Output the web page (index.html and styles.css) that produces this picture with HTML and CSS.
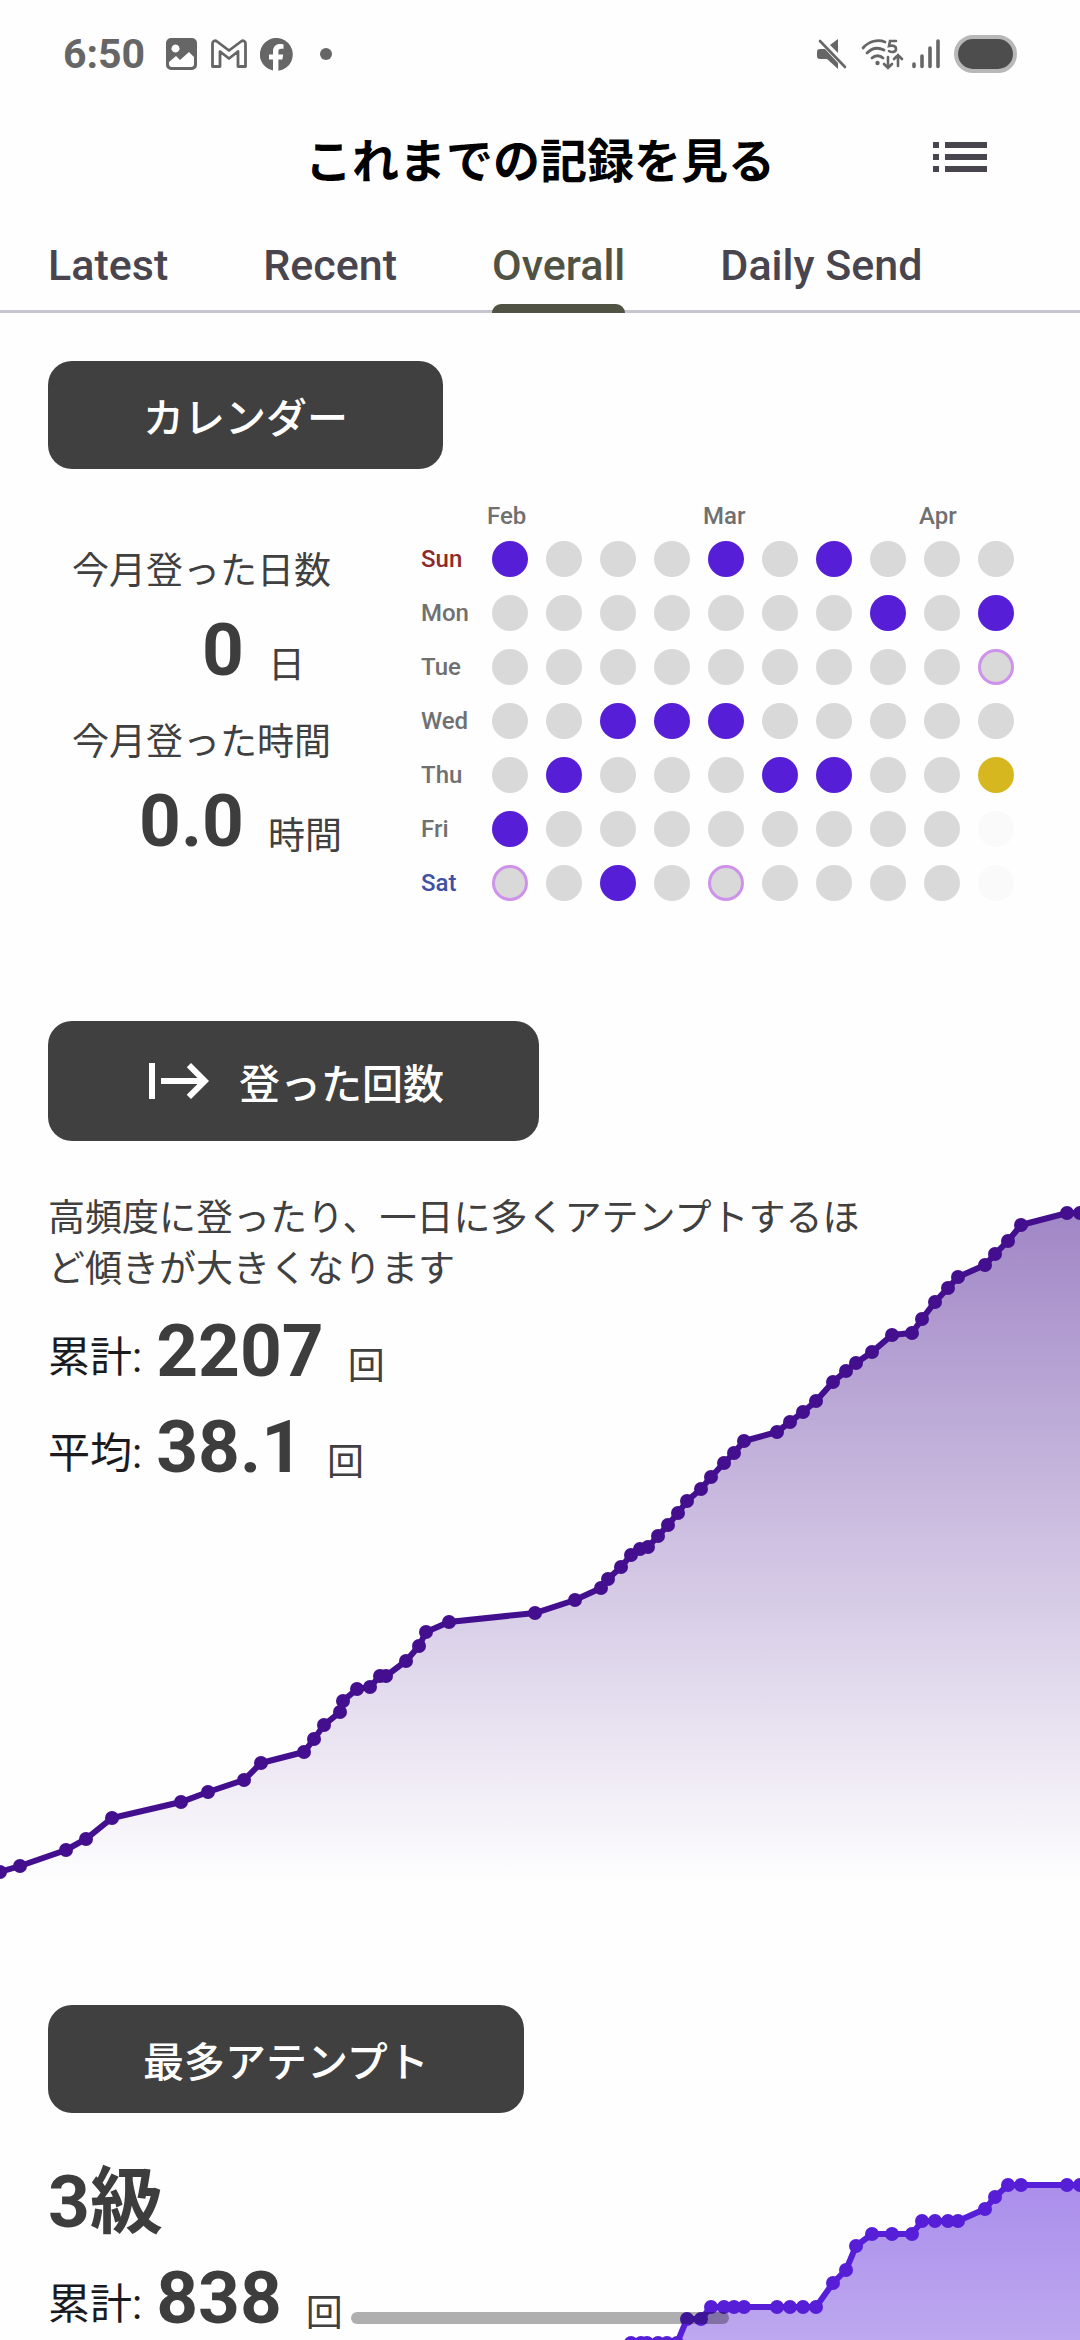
FILE: index.html
```html
<!DOCTYPE html>
<html lang="ja">
<head>
<meta charset="utf-8">
<meta name="viewport" content="width=device-width, initial-scale=1">
<title>これまでの記録を見る</title>
<link rel="stylesheet" href="styles.css">
</head>
<body>
<div class="statusbar">
  <div class="status-left">
    <span class="clock">6:50</span>
    <svg class="s-image" width="32" height="32" viewBox="0 0 32 32"><path fill="#666" fill-rule="evenodd" d="M5 0h21a5 5 0 0 1 5 5v22a5 5 0 0 1-5 5H5a5 5 0 0 1-5-5V5a5 5 0 0 1 5-5zM9.500 6.500a4 4 0 1 0 .01 0zM3 24v2a3 3 0 0 0 3 3h19a3 3 0 0 0 3-3v-7l-5-5-9 8-4-4z"/></svg>
    <svg class="s-mail" width="36" height="30" viewBox="0 0 36 30"><path fill="none" stroke="#666" stroke-width="2.800" stroke-linejoin="round" d="M1.500 27.500V4.500C1.500 2 4 1 6 2.500L18 11.500 30 2.500C32 1 34.500 2 34.500 4.500V27.500H27V12.500L18 19.500 9 12.500V27.500z"/></svg>
    <svg width="33" height="33" viewBox="0 0 33 33"><path fill="#666" d="M13 32.600V21.500H9v-5h4V13.500C13 8.500 16 6 20 6c2 0 3.500.3 3.500.3v4.400h-2.200c-2.200 0-2.900 1.300-2.900 2.700v3.100h4.800l-.8 5h-4V32.800A16.500 16.500 0 1 0 13 32.600z"/></svg>
    <span class="dot-more"></span>
  </div>
  <div class="status-right">
    <svg class="s-mute" width="30" height="32" viewBox="0 0 30 32"><path fill="#666" d="M0 14a3 3 0 0 1 3-3h5l13 14v6L10 21H3a3 3 0 0 1-3-3zM13 7l8-6v14z"/><path stroke="#666" stroke-width="2.600" stroke-linecap="round" d="M3 3l25 26"/></svg>
    <svg class="s-wifi" width="43" height="32" viewBox="0 0 43 32"><g fill="none" stroke="#666" stroke-width="2.800" stroke-linecap="round"><path d="M2 10C8 3 17 1 24 4M6 15c5-5 11-6 17-3M11 20c3-3 8-3 11 0"/><path stroke-width="2.600" d="M35 3h-6l-1 5c4-1 7 0 7 3s-4 4-7 2M27 19v11M23 26l4 4 4-4M37 28V17M33 21l4-4 4 4"/></g><circle cx="16.500" cy="25" r="2.200" fill="#666"/></svg>
    <svg class="s-signal" width="28" height="30" viewBox="0 0 28 30"><path stroke="#666" stroke-width="3.600" stroke-linecap="round" d="M2 25v2.500M10 17v10.500M18 9v18.500M26 2v25.500"/></svg>
    <span class="battery"></span>
  </div>
</div>

<header class="appbar">
  <h1 class="title">これまでの記録を見る</h1>
  <button class="menu" type="button" aria-label="リスト"><svg width="72" height="72" viewBox="0 0 24 24"><path fill="currentColor" d="M3 13h2v-2H3v2zm0 4h2v-2H3v2zm0-8h2V7H3v2zm4 4h14v-2H7v2zm0 4h14v-2H7v2zM7 7v2h14V7H7z"/></svg></button>
</header>

<nav class="tabs">
  <a class="tab" href="#latest">Latest</a>
  <a class="tab" href="#recent">Recent</a>
  <a class="tab active" href="#overall" aria-current="page">Overall</a>
  <a class="tab" href="#daily">Daily Send</a>
</nav>

<main class="content">
  <section class="calendar-section">
    <button class="chip" type="button"><span class="chip-text">カレンダー</span></button>
    <div class="calendar-row">
      <div class="month-stats">
        <p class="stat-label">今月登った日数</p>
        <p class="month-value"><strong class="num">0</strong><span class="unit">日</span></p>
        <p class="stat-label">今月登った時間</p>
        <p class="month-value"><strong class="num">0.0</strong><span class="unit">時間</span></p>
      </div>
      <table class="calendar">
        <thead>
          <tr><td></td><th colspan="4" scope="colgroup">Feb</th><th colspan="4" scope="colgroup">Mar</th><th colspan="2" scope="colgroup">Apr</th></tr>
        </thead>
        <tbody>
          <tr><th class="sun" scope="row">Sun</th><td><i class="day on"></i></td><td><i class="day"></i></td><td><i class="day"></i></td><td><i class="day"></i></td><td><i class="day on"></i></td><td><i class="day"></i></td><td><i class="day on"></i></td><td><i class="day"></i></td><td><i class="day"></i></td><td><i class="day"></i></td></tr>
          <tr><th scope="row">Mon</th><td><i class="day"></i></td><td><i class="day"></i></td><td><i class="day"></i></td><td><i class="day"></i></td><td><i class="day"></i></td><td><i class="day"></i></td><td><i class="day"></i></td><td><i class="day on"></i></td><td><i class="day"></i></td><td><i class="day on"></i></td></tr>
          <tr><th scope="row">Tue</th><td><i class="day"></i></td><td><i class="day"></i></td><td><i class="day"></i></td><td><i class="day"></i></td><td><i class="day"></i></td><td><i class="day"></i></td><td><i class="day"></i></td><td><i class="day"></i></td><td><i class="day"></i></td><td><i class="day first"></i></td></tr>
          <tr><th scope="row">Wed</th><td><i class="day"></i></td><td><i class="day"></i></td><td><i class="day on"></i></td><td><i class="day on"></i></td><td><i class="day on"></i></td><td><i class="day"></i></td><td><i class="day"></i></td><td><i class="day"></i></td><td><i class="day"></i></td><td><i class="day"></i></td></tr>
          <tr><th scope="row">Thu</th><td><i class="day"></i></td><td><i class="day on"></i></td><td><i class="day"></i></td><td><i class="day"></i></td><td><i class="day"></i></td><td><i class="day on"></i></td><td><i class="day on"></i></td><td><i class="day"></i></td><td><i class="day"></i></td><td><i class="day today"></i></td></tr>
          <tr><th scope="row">Fri</th><td><i class="day on"></i></td><td><i class="day"></i></td><td><i class="day"></i></td><td><i class="day"></i></td><td><i class="day"></i></td><td><i class="day"></i></td><td><i class="day"></i></td><td><i class="day"></i></td><td><i class="day"></i></td><td><i class="day future"></i></td></tr>
          <tr><th class="sat" scope="row">Sat</th><td><i class="day first"></i></td><td><i class="day"></i></td><td><i class="day on"></i></td><td><i class="day"></i></td><td><i class="day first"></i></td><td><i class="day"></i></td><td><i class="day"></i></td><td><i class="day"></i></td><td><i class="day"></i></td><td><i class="day future"></i></td></tr>
        </tbody>
      </table>
    </div>
  </section>

  <section class="graph-section">
    <button class="chip" type="button"><svg width="72" height="72" viewBox="0 0 24 24"><path fill="currentColor" d="M14.590 7.410 18.170 11H6v2h12.170l-3.590 3.590L16 18l6-6-6-6-1.410 1.410zM2 6v12h2V6H2z"/></svg><span class="chip-text">登った回数</span></button>
    <div class="graph">
      <svg class="chart" viewBox="0 1141 1080 760" aria-hidden="true">
        <defs>
          <linearGradient id="fade-total" gradientUnits="userSpaceOnUse" x1="0" y1="1213" x2="0" y2="1885"><stop offset="0" stop-color="#430f8e" stop-opacity=".5"/><stop offset="1" stop-color="#430f8e" stop-opacity="0"/></linearGradient>
          <marker id="dot-total" markerUnits="userSpaceOnUse" markerWidth="16" markerHeight="16" refX="8" refY="8"><circle cx="8" cy="8" r="7" fill="#430f8e"/></marker>
        </defs>
        <path fill="url(#fade-total)" d="M0 1872L20 1866 66 1850 86 1839 112 1818 181 1802 208 1792 244 1780 261 1763 304 1752 314 1739 324 1725 340 1712 343 1701 357 1689 370 1687 380 1676 386 1676 406 1661 419 1646 426 1632 449 1622 535 1613 575 1600 601 1588 608 1579 621 1567 631 1555 640 1549 648 1547 658 1536 668 1525 678 1513 687 1501 701 1489 711 1477 724 1463 734 1453 744 1441 777 1432 790 1422 803 1412 816 1401 833 1382 846 1371 856 1363 872 1352 892 1335 912 1333 922 1319 935 1302 948 1288 958 1277 985 1265 995 1254 1008 1241 1021 1225 1067 1213 1080 1213V1885H0z"/>
        <polyline class="line-total" points="0,1872 20,1866 66,1850 86,1839 112,1818 181,1802 208,1792 244,1780 261,1763 304,1752 314,1739 324,1725 340,1712 343,1701 357,1689 370,1687 380,1676 386,1676 406,1661 419,1646 426,1632 449,1622 535,1613 575,1600 601,1588 608,1579 621,1567 631,1555 640,1549 648,1547 658,1536 668,1525 678,1513 687,1501 701,1489 711,1477 724,1463 734,1453 744,1441 777,1432 790,1422 803,1412 816,1401 833,1382 846,1371 856,1363 872,1352 892,1335 912,1333 922,1319 935,1302 948,1288 958,1277 985,1265 995,1254 1008,1241 1021,1225 1067,1213 1080,1213"/>
      </svg>
      <div class="summary">
        <p class="note">高頻度に登ったり、一日に多くアテンプトするほど傾きが大きくなります</p>
        <p class="figure"><span class="key">累計:</span><strong class="num">2207</strong><span class="unit">回</span></p>
        <p class="figure"><span class="key">平均:</span><strong class="num">38.1</strong><span class="unit">回</span></p>
      </div>
    </div>
  </section>

  <section class="graph-section">
    <button class="chip" type="button"><span class="chip-text">最多アテンプト</span></button>
    <div class="graph">
      <svg class="chart" viewBox="0 2113 1080 760" aria-hidden="true">
        <defs>
          <linearGradient id="fade-grade" gradientUnits="userSpaceOnUse" x1="0" y1="2185" x2="0" y2="2857"><stop offset="0" stop-color="#571ed8" stop-opacity=".5"/><stop offset="1" stop-color="#571ed8" stop-opacity="0"/></linearGradient>
          <marker id="dot-grade" markerUnits="userSpaceOnUse" markerWidth="16" markerHeight="16" refX="8" refY="8"><circle cx="8" cy="8" r="7" fill="#571ed8"/></marker>
        </defs>
        <path fill="url(#fade-grade)" d="M0 2845L304 2723 535 2576 631 2343 677 2343 687 2319 701 2319 711 2307 816 2307 833 2283 846 2270 856 2246 872 2234 912 2234 922 2221 958 2221 985 2209 995 2197 1008 2185 1080 2185V2857H0z"/>
        <polyline class="line-grade" points="0,2845 304,2723 535,2576 631,2343 641,2343 647,2343 658,2343 667,2343 677,2343 687,2319 701,2319 711,2307 724,2307 734,2307 744,2307 777,2307 790,2307 803,2307 816,2307 833,2283 846,2270 856,2246 872,2234 892,2234 912,2234 922,2221 935,2221 948,2221 958,2221 985,2209 995,2197 1008,2185 1021,2185 1067,2185 1080,2185"/>
      </svg>
      <div class="summary">
        <p class="figure"><strong class="num">3級</strong></p>
        <p class="figure"><span class="key">累計:</span><strong class="num">838</strong><span class="unit">回</span></p>
      </div>
    </div>
  </section>
</main>
<div class="home-indicator"></div>
</body>
</html>
```
FILE: styles.css
```css
* {
  box-sizing: border-box;
}

body {
  margin: 0;
  height: 100vh;
  display: flex;
  flex-direction: column;
  background: #fefefe;
  color: #404040;
  font-family: Roboto, "Noto Sans CJK JP", sans-serif;
}

h1,
p {
  margin: 0;
}

button {
  border: 0;
  font: inherit;
}

svg {
  display: block;
  flex: none;
}

/* Status bar */
.statusbar {
  flex: none;
  display: flex;
  justify-content: space-between;
  align-items: center;
  height: 108px;
  padding: 0 63px;
}

.status-left,
.status-right {
  display: flex;
  align-items: center;
}

.status-left {
  gap: 13px;
}

.clock {
  margin-right: 8px;
  color: #666;
  font-size: 41px;
  font-weight: 700;
  line-height: 48px;
}

.dot-more {
  width: 12px;
  height: 12px;
  margin-left: 14px;
  border-radius: 50%;
  background: #666;
}

.status-right {
  gap: 14px;
}

.s-signal {
  margin-left: -6px;
}

.battery {
  width: 63px;
  height: 38px;
  border: 4px solid #b8b8b8;
  border-radius: 19px;
  background: #4d4d4d;
}

/* Title bar */
.appbar {
  flex: none;
  display: grid;
  grid-template-columns: 1fr auto 1fr;
  align-items: center;
  height: 98px;
  padding: 0 84px;
}

.title {
  grid-column: 2;
  padding-top: 10px;
  color: #000;
  font-size: 47px;
  font-weight: 700;
  line-height: 72px;
}

.menu {
  justify-self: end;
  padding: 0;
  background: none;
  color: #49454e;
}

/* Tabs */
.tabs {
  flex: none;
  display: flex;
  gap: 95px;
  height: 107px;
  padding: 0 48px;
  border-bottom: 3px solid #c9c5d0;
}

.tab {
  height: 107px;
  padding-top: 35px;
  color: #49454e;
  font-size: 43px;
  font-weight: 500;
  line-height: 48px;
  text-decoration: none;
}

.tab.active {
  display: flex;
  flex-direction: column;
  justify-content: space-between;
  color: #505344;
}

.tab.active::after {
  content: "";
  height: 9px;
  border-radius: 9px 9px 0 0;
  background: #505344;
}

/* Scrolling content */
.content {
  flex: 1;
  min-height: 0;
  overflow-y: auto;
  scrollbar-width: none;
  padding-top: 48px;
}

.chip {
  display: flex;
  align-items: center;
  gap: 24px;
  margin-left: 48px;
  padding: 24px 95px;
  border-radius: 24px;
  background: #404040;
  color: #fff;
  font-size: 41px;
  font-weight: 500;
  line-height: 52px;
}

.chip-text {
  padding-top: 8px;
}

/* Calendar */
.calendar-section {
  margin-bottom: 111px;
}

.calendar-row {
  display: flex;
  justify-content: space-between;
  padding: 27px 57px 0 72px;
}

.month-stats {
  padding-top: 46px;
}

.stat-label {
  font-size: 37px;
  line-height: 60px;
  color: #404040;
}

.month-value {
  display: grid;
  grid-template-columns: 172px auto;
  column-gap: 24px;
  height: 111px;
}

.month-value .num {
  text-align: right;
}

.num {
  font-size: 73px;
  font-weight: 700;
  line-height: 96px;
  color: #3d3d3d;
}

.unit {
  padding-top: 34px;
  font-size: 37px;
  line-height: 60px;
  color: #404040;
}

.calendar {
  border-collapse: collapse;
  table-layout: fixed;
  width: 602px;
}

.calendar th,
.calendar td {
  height: 54px;
  padding: 0;
}

.calendar thead td,
.calendar thead th {
  height: 36px;
}

.calendar thead td {
  width: 62px;
}

.calendar th {
  color: #707070;
  font-size: 24px;
  font-weight: 500;
  line-height: 28px;
  text-align: left;
}

.calendar thead th {
  padding: 6px 0 0 4px;
  vertical-align: top;
}

.calendar .sun {
  color: #8f2a2a;
}

.calendar .sat {
  color: #3f51a5;
}

.day {
  display: block;
  width: 36px;
  height: 36px;
  margin: 0 auto;
  border-radius: 50%;
  background: #d9d9d9;
}

.day.on {
  background: #571ed8;
}

.day.first {
  border: 3px solid #cf92ea;
}

.day.today {
  background: #d7b720;
}

.day.future {
  background: #fafafa;
}

/* Graphs: the summary text lies in the same grid cell as the chart */
.graph-section {
  margin-bottom: 104px;
}

.graph {
  display: grid;
}

.chart,
.summary {
  grid-area: 1 / 1;
}

.chart {
  width: 100%;
  height: auto;
}

.line-total,
.line-grade {
  fill: none;
  stroke-width: 6;
}

.line-total {
  stroke: #430f8e;
  marker: url(#dot-total);
}

.line-grade {
  stroke: #571ed8;
  marker: url(#dot-grade);
}

.summary {
  padding: 41px 216px 0 48px;
}

.note {
  padding: 11px 0 8px;
  font-size: 37px;
  line-height: 51px;
  color: #404040;
}

.figure {
  display: flex;
}

.figure .key {
  padding: 25px 14px 0 0;
  color: #1b1b1f;
  font-size: 42px;
  line-height: 60px;
}

.figure .unit {
  padding-left: 24px;
}

.home-indicator {
  position: fixed;
  bottom: 16px;
  left: 50%;
  width: 35%;
  height: 12px;
  border-radius: 6px;
  background: rgba(0, 0, 0, .31);
  transform: translateX(-50%);
}
```
